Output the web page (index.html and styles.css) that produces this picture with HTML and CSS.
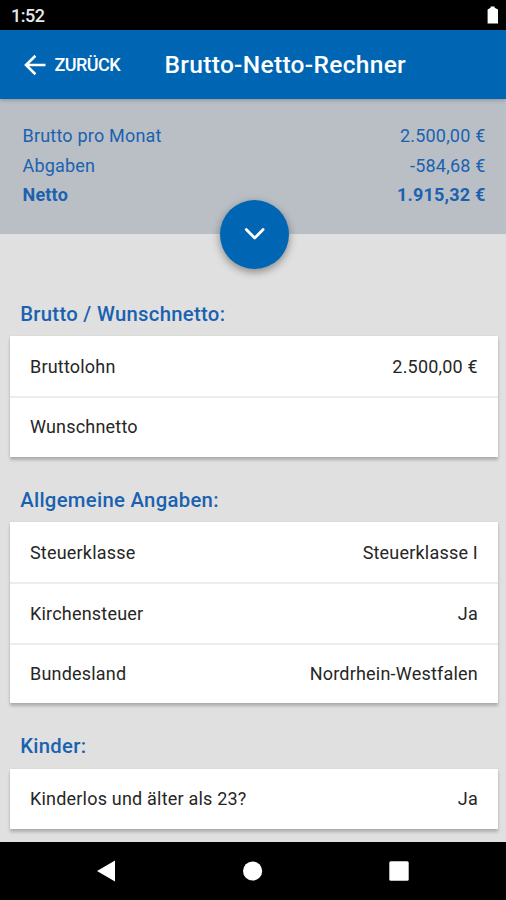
FILE: index.html
```html
<!DOCTYPE html>
<html lang="de">
<head>
<meta charset="utf-8">
<title>Brutto-Netto-Rechner</title>
<link rel="stylesheet" href="styles.css">
</head>
<body>
<div class="screen">
  <div class="status">
    <span class="clock">1:52</span>
    <svg class="battery" width="12" height="18" viewBox="0 0 12 18"><path d="M3.6 0.6h4v1.2L11 3.4V17.4H0.6V3.4L3.6 1.8z" fill="#fff"/></svg>
  </div>
  <header class="appbar">
    <div class="back">
      <svg width="22" height="22" viewBox="0 0 22 22" fill="none" stroke="#fff" stroke-width="2.6"><path d="M21.5 11H2M11.4 1.8L2 11L11.4 20.2"/></svg>
      <span class="back-label">ZURÜCK</span>
    </div>
    <h1 class="title">Brutto-Netto-Rechner</h1>
  </header>
  <section class="summary">
    <div class="sum-row"><span>Brutto pro Monat</span><span>2.500,00 €</span></div>
    <div class="sum-row"><span>Abgaben</span><span>-584,68 €</span></div>
    <div class="sum-row total"><span>Netto</span><span>1.915,32 €</span></div>
    <button class="fab" aria-label="Details">
      <svg width="22" height="14" viewBox="0 0 22 14" fill="none" stroke="#fff" stroke-width="2.8" stroke-linecap="round" stroke-linejoin="round"><path d="M2.3 2.6L10.7 11L19.1 2.6"/></svg>
    </button>
  </section>
  <main class="content">
    <section class="group">
      <h2 class="heading">Brutto / Wunschnetto:</h2>
      <div class="card">
        <div class="row"><span>Bruttolohn</span><span>2.500,00 €</span></div>
        <div class="row"><span>Wunschnetto</span></div>
      </div>
    </section>
    <section class="group">
      <h2 class="heading">Allgemeine Angaben:</h2>
      <div class="card">
        <div class="row"><span>Steuerklasse</span><span>Steuerklasse I</span></div>
        <div class="row"><span>Kirchensteuer</span><span>Ja</span></div>
        <div class="row"><span>Bundesland</span><span>Nordrhein-Westfalen</span></div>
      </div>
    </section>
    <section class="group">
      <h2 class="heading">Kinder:</h2>
      <div class="card">
        <div class="row"><span>Kinderlos und älter als 23?</span><span>Ja</span></div>
      </div>
    </section>
  </main>
  <nav class="navbar">
    <svg width="20" height="24" viewBox="0 0 20 24"><path d="M19 1.5V22.5L1 12z" fill="#fff"/></svg>
    <svg width="21" height="20" viewBox="0 0 21 20"><circle cx="10.6" cy="10" r="9.6" fill="#fff"/></svg>
    <svg width="20" height="20" viewBox="0 0 20 20"><rect x="0.3" y="0.3" width="19.4" height="19.4" rx="1.5" fill="#fff"/></svg>
  </nav>
</div>
</body>
</html>
```
FILE: styles.css
```css
* { box-sizing: border-box; }
body { margin: 0; font-family: Roboto, "Liberation Sans", sans-serif; }
.screen { width: 506px; height: 900px; display: flex; flex-direction: column; background: #e0e0e0; overflow: hidden; }
.status { flex: none; height: 30px; background: #000; color: #e8e8e8; display: flex; justify-content: space-between; align-items: center; padding: 1px 7.5px 0 11px; }
.clock { font-size: 18px; font-weight: 500; letter-spacing: -0.5px; }
.battery { display: block; margin-top: -1px; }
.appbar { flex: none; height: 69px; background: #0066b3; color: #fff; display: flex; align-items: center; padding-left: 24px; position: relative; z-index: 1; box-shadow: 0 1px 4px rgba(0,0,0,.25); }
.back { display: flex; align-items: center; gap: 8.5px; width: 140.5px; }
.back-label { font-size: 18px; font-weight: 500; letter-spacing: -0.55px; }
.title { margin: 0; font-size: 24.5px; font-weight: 500; letter-spacing: .32px; }
.summary { flex: none; height: 135px; background: #b9bfc5; color: #1a62b0; padding: 22px 20.5px 0 22.5px; position: relative; }
.sum-row { display: flex; justify-content: space-between; font-size: 18px; line-height: 29.7px; letter-spacing: .2px; }
.total { font-weight: 700; }
.fab { position: absolute; left: 220px; bottom: -34.5px; width: 69px; height: 69px; border: 0; border-radius: 50%; padding: 0; background: #0066b3; display: flex; align-items: center; justify-content: center; box-shadow: 0 3px 8px rgba(0,0,0,.4); }
.content { flex: 1; min-height: 0; padding: 58px 8.5px 0 10.4px; overflow: hidden; }
.group { margin-bottom: 21.5px; }
.heading { margin: 0; height: 44.2px; padding-left: 9.8px; font-size: 20.3px; line-height: 44px; font-weight: 500; letter-spacing: .3px; color: #1a62b0; }
.card { background: #fff; color: #262626; box-shadow: 0 3px 3px rgba(0,0,0,.22), 0 0 1px rgba(0,0,0,.12); }
.row { height: 60.2px; display: flex; justify-content: space-between; align-items: center; padding: 0 19.6px; font-size: 18px; letter-spacing: .2px; }
.row + .row { border-top: 2px solid #ededed; padding-bottom: 1px; }
.navbar { flex: none; height: 58px; background: #000; display: flex; align-items: center; justify-content: space-between; padding: 0 97px 0 96px; }
```
